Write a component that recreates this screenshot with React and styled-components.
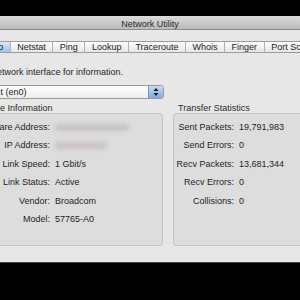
import React from "react";
import styled, { createGlobalStyle } from "styled-components";

const Global = createGlobalStyle`
  html, body { margin: 0; padding: 0; background: #000; overflow: hidden; }
  body { font-family: "Liberation Sans", Arial, sans-serif; }
`;

const Screen = styled.div`
  width: 300px;
  height: 300px;
  background: #000;
  overflow: hidden;
  display: flex;
  flex-direction: column;
`;

const TopBand = styled.div`
  height: 16px;
  flex: none;
`;

const Window = styled.div`
  flex: none;
  width: 440px;
  margin-left: -70px;
  height: 247px;
  background: #e7e7e7;
  border-bottom: 1px solid #4a4a4a;
  display: flex;
  flex-direction: column;
  box-sizing: border-box;
`;

const TitleBar = styled.div`
  height: 14px;
  flex: none;
  background: linear-gradient(#dcdcdc, #bababa);
  border-bottom: 1px solid #8e8e8e;
  display: flex;
  align-items: center;
  justify-content: center;
  font-size: 9px;
  color: #2a2a2a;
  box-sizing: border-box;
  padding-top: 2px;
`;

const Body = styled.div`
  display: flex;
  flex-direction: column;
  padding-left: 27px;
`;

const Tabs = styled.div`
  display: flex;
  justify-content: center;
  margin-top: 11px;
  margin-left: -27px;
  height: 12px;
`;

const Tab = styled.div`
  padding: 0 6.5px;
  height: 12px;
  font-size: 9px;
  color: #1c1c1c;
  box-sizing: border-box;
  border-top: 1px solid #9c9c9c;
  border-bottom: 1px solid #9c9c9c;
  border-right: 1px solid #b0b0b0;
  line-height: 10px;
  background: ${(p) =>
    p.$active
      ? "linear-gradient(#d6e6fa, #9fc2ee)"
      : "linear-gradient(#fdfdfd, #e6e6e6)"};
`;

const Prompt = styled.div`
  margin-top: 13px;
  font-size: 9px;
  line-height: 12px;
  color: #1e1e1e;
`;

const Popup = styled.div`
  margin-top: 7px;
  margin-left: 3px;
  width: 204px;
  height: 14px;
  box-sizing: border-box;
  border: 1px solid #9a9a9a;
  border-radius: 3px;
  background: linear-gradient(#ffffff, #ececec);
  display: flex;
  align-items: center;
  font-size: 9px;
  color: #1e1e1e;
  overflow: hidden;
`;

const PopupText = styled.span`
  flex: 1;
  padding-left: 8px;
`;

const Stepper = styled.div`
  width: 14px;
  height: 100%;
  background: linear-gradient(#c7dcf7, #7fa9e6);
  border-left: 1px solid #7a93bd;
  display: flex;
  align-items: center;
  justify-content: center;
`;

const Groups = styled.div`
  margin-top: 5px;
  margin-left: 8px;
  display: grid;
  grid-template-columns: 198px 198px;
  column-gap: 10px;
`;

const Group = styled.div`
  display: flex;
  flex-direction: column;
`;

const GroupLabel = styled.div`
  font-size: 9px;
  line-height: 9px;
  height: 9px;
  padding-left: 5px;
  color: #2a2a2a;
`;

const Box = styled.div`
  height: 133px;
  box-sizing: border-box;
  border: 1px solid #c4c4c4;
  border-radius: 3px;
  background: #dddddd;
  padding-top: 4px;
  display: grid;
  grid-template-columns: ${(p) => p.$labelWidth}px 1fr;
  grid-auto-rows: 18.4px;
  column-gap: 5px;
  align-content: start;
`;

const Key = styled.div`
  text-align: right;
  font-size: 9px;
  line-height: 18.4px;
  color: #1e1e1e;
  white-space: nowrap;
`;

const Value = styled.div`
  font-size: 9px;
  line-height: 18.4px;
  color: #1e1e1e;
  white-space: nowrap;
  display: flex;
  align-items: center;
`;

const Redacted = styled.span`
  display: inline-block;
  height: 7px;
  background: #c9c2c5;
  filter: blur(2px);
  border-radius: 2px;
`;

const tabs = ["Info", "Netstat", "Ping", "Lookup", "Traceroute", "Whois", "Finger", "Port Scan"];

const info = [
  ["Hardware Address:", { blur: 74 }],
  ["IP Address:", { blur: 52 }],
  ["Link Speed:", "1 Gbit/s"],
  ["Link Status:", "Active"],
  ["Vendor:", "Broadcom"],
  ["Model:", "57765-A0"],
];

const stats = [
  ["Sent Packets:", "19,791,983"],
  ["Send Errors:", "0"],
  ["Recv Packets:", "13,681,344"],
  ["Recv Errors:", "0"],
  ["Collisions:", "0"],
];

function Rows({ rows }) {
  return rows.map(([k, v]) => (
    <React.Fragment key={k}>
      <Key>{k}</Key>
      <Value>
        {typeof v === "string" ? v : <Redacted style={{ width: v.blur }} />}
      </Value>
    </React.Fragment>
  ));
}

export default function App() {
  return (
    <Screen>
      <Global />
      <TopBand />
      <Window>
        <TitleBar>Network Utility</TitleBar>
        <Body>
          <Tabs>
            {tabs.map((t, i) => (
              <Tab key={t} $active={i === 0}>
                {t}
              </Tab>
            ))}
          </Tabs>
          <Prompt>Select a network interface for information.</Prompt>
          <Popup>
            <PopupText>Ethernet (en0)</PopupText>
            <Stepper>
              <svg width="6" height="10" viewBox="0 0 6 10">
                <path d="M3 1 L5.5 4 L0.5 4 Z" fill="#1a1a1a" />
                <path d="M3 9 L5.5 6 L0.5 6 Z" fill="#1a1a1a" />
              </svg>
            </Stepper>
          </Popup>
          <Groups>
            <Group>
              <GroupLabel>Interface Information</GroupLabel>
              <Box $labelWidth={84}>
                <Rows rows={info} />
              </Box>
            </Group>
            <Group>
              <GroupLabel>Transfer Statistics</GroupLabel>
              <Box $labelWidth={60}>
                <Rows rows={stats} />
              </Box>
            </Group>
          </Groups>
        </Body>
      </Window>
    </Screen>
  );
}
